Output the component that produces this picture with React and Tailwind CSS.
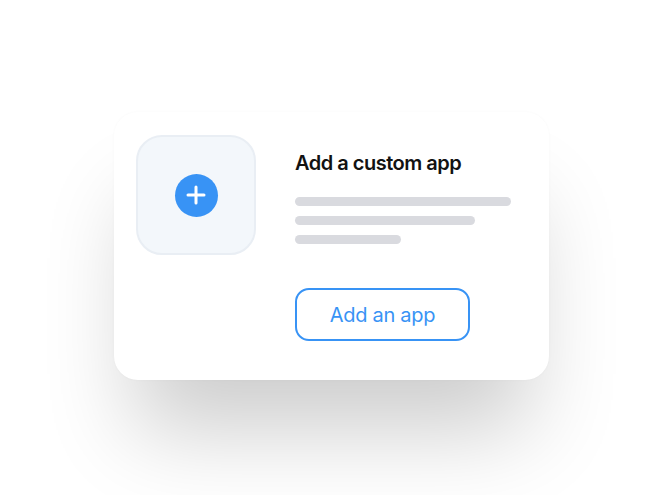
export default function App() {
  return (
    <div className="w-[660px] h-[495px] bg-white overflow-hidden font-['Inter',sans-serif]">
      <div className="pt-[112px] pl-[114px]">
        <div className="w-[435px] h-[268px] bg-white rounded-[24px] shadow-[0_70px_90px_-20px_rgba(0,0,0,0.2),0_0_3px_rgba(0,0,0,0.03)] flex pl-[22px] pt-[23px]">
          <div className="w-[120px] h-[120px] rounded-[26px] bg-[#f3f7fb] border-2 border-[#e9eef4] flex items-center justify-center shrink-0">
            <div className="w-[43px] h-[43px] rounded-full bg-[#3893f5] flex items-center justify-center">
              <svg width="22" height="22" viewBox="0 0 22 22" fill="none" stroke="white" strokeWidth="3" strokeLinecap="round">
                <path d="M11 3v16M3 11h16" />
              </svg>
            </div>
          </div>
          <div className="ml-[39px] flex flex-col">
            <h2 className="text-[20px] leading-[24px] font-semibold text-[#121212] tracking-[-0.5px] mt-[16px]">Add a custom app</h2>
            <div className="mt-[22px] flex flex-col gap-[10px]">
              <div className="w-[216px] h-[9px] rounded-full bg-[#d9dadf]" />
              <div className="w-[180px] h-[9px] rounded-full bg-[#d9dadf]" />
              <div className="w-[106px] h-[9px] rounded-full bg-[#d9dadf]" />
            </div>
            <button className="mt-[44px] w-[175px] h-[53px] rounded-[14px] border-2 border-[#3893f5] text-[#3893f5] text-[20px] flex items-center justify-center tracking-[-0.3px]">
              Add an app
            </button>
          </div>
        </div>
      </div>
    </div>
  );
}
